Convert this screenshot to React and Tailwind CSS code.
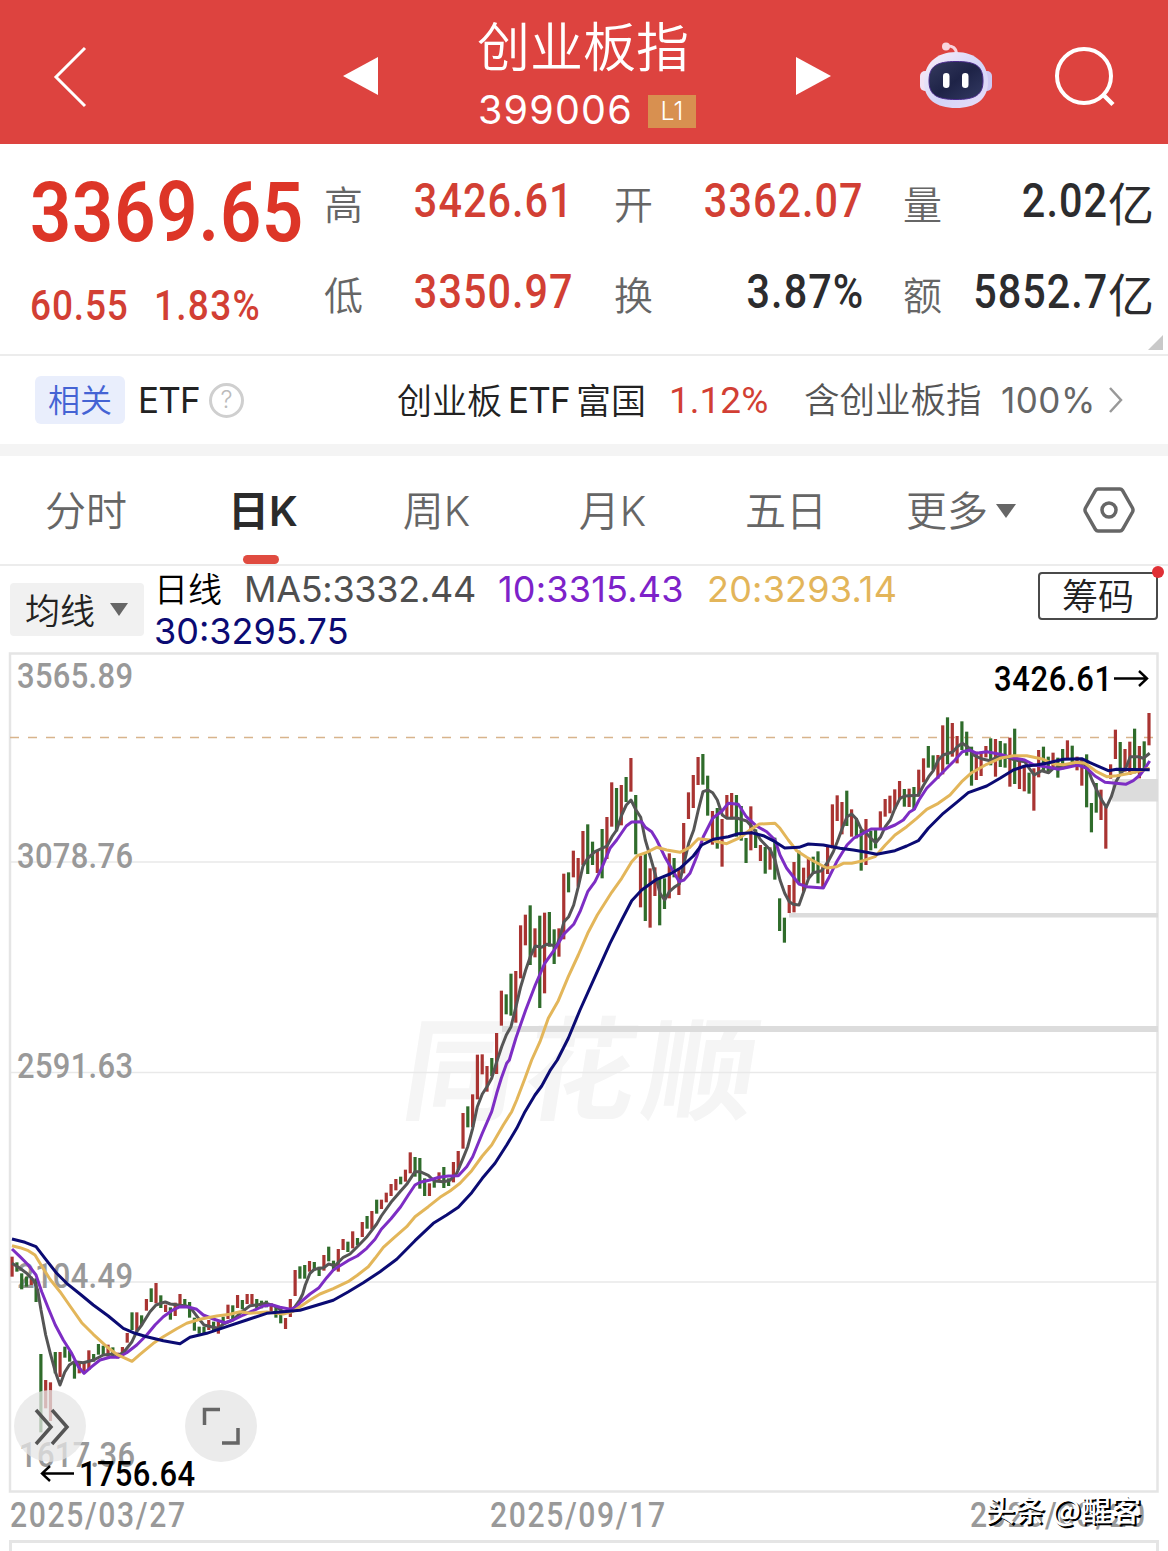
import React, { useState } from "react";

const RED = "#a93432";
const GREEN = "#2f6c2b";

// Daily bars, oldest first: colour, high, low. Every block has its own base line.
const BAR_BLOCKS = [
  {
    base: 1704,
    bars: "R110-170 G127-155 G160-208 G170-200 R170-195 G175-246 G402-637 R480-565 R487-603 G396-460 R396-471 G380-413 G392-425 G425-476 R430-460 R425-460 R391-450 G402-425 G372-404 G377-404 R374-410 G382-410 R398-415 R381-404 R339-368 G277-330 R277-333 G286-316 R237-272 G205-246 R189-250 G226-264 R254-276 G262-299 R248-288 R222-254 G237-263 G246-293 G293-332 G320-341 G320-344 R300-330 G305-332 R305-341 G290-315 R254-297 G256-300 R225-264 G240-268 R222-252 R222-252 G237-265 G242-265 G242-262 R250-275 G255-293 G272-310 R294-327 R237-291 R150-228 G139-176",
  },
  {
    base: 1044,
    bars: "G795-836 R783-815 G786-812 G800-828 R765-812 G740-784 G782-812 R747-815 R717-750 G725-756 R694-745 G714-736 R666-711 G648-686 R633-688 G599-641 R599-627 R578-607 R552-588 R537-571 G530-553 R509-545 R457-520 G471-530 G474-566 G535-588 R550-588 G535-563 R517-540 G501-564 G535-558 R486-547 R453-510 R339-446 G319-382 R283-381 R164-298 R163-223 R198-275 G174-228 R99-222",
  },
  {
    base: 264,
    bars: "R752-857 G763-823 G701-827 R693-848 R556-715 R524-616 G496-675 R565-652 G527-804 R518-760 G516-620 G568-672 R565-650 R401-598 G397-457 R332-412 R354-440 R273-375 G253-402 G305-375 R330-399 G267-415 R231-357 R127-260 G144-274 R135-256 G111-186 R54-155 G165-343 R347-502 G342-543 R385-563 R382-468 G415-556 G415-507 R340-475 G354-412 R385-465 R249-400 R157-237 R105-204 R51-135 G42-134 G107-227 R213-314 G204-326 R237-380 R165-237 R159-238 G165-290 G198-302 G294-369 R199-331 G268-324 R315-363 G321-401 R322-389 G293-419 G475-573 G533-608",
  },
  {
    base: -36,
    bars: "R735-819 R666-817 G632-730 R683-755 R655-715 G650-700 G634-730 R680-745 R620-702 R493-625 R466-543 R486-583 G452-558 R508-590 G535-595 G570-692 R537-675 G572-631 G568-625 R514-565 R477-530 R467-520 R448-508 R423-480 G447-500 R446-501 G441-510 R389-470 R355-427 G318-383 G346-390 R345-416 R256-403 G232-373 R249-350 R288-370 G244-330 G275-347 G320-437 R335-420 R335-408 R318-352 G295-376 R297-410 G303-381 G310-383 R293-440 G266-432 R355-447 R375-454 G398-461 R385-512 R330-412 G320-390 G350-400 R338-385 G353-413 G327-388 R301-360 G317-375 R350-391 R360-437 G343-502 G489-577 G429-518 R449-540 R500-626 R373-416 R269-357 G306-398 R327-395 R305-405 G266-400 R318-415 G304-388 R219-316",
  },
];

// Origins of the four stretches that every average line is made of
const ORIGINS = [
  [0, 1704],
  [900, 1044],
  [1440, 264],
  [2340, -36],
];

const AVERAGES = [
  {
    name: "MA5",
    color: "#555555",
    parts: [
      "36,130 60,145 80,160 100,180 113,210 123,270 137,345 151,400 166,455 180,495 194,457 208,435 223,425 250,428 281,420 310,405 340,402 355,405 370,398 396,365 410,335 425,315 450,275 468,255 482,250 496,246 511,252 540,256 560,258 575,268 598,298 612,315 640,322 655,325 670,312 698,300 720,280 750,257 775,254 800,250 828,260 850,275 871,277 885,260 899,240 908,222",
      "16,855 30,820 43,808 71,803 86,792 105,797 130,772 150,762 172,740 201,710 230,672 244,648 273,607 302,573 320,553 345,515 360,515 385,526 403,543 431,545 450,541 470,520 489,475 503,440 518,385 532,320 547,282 561,260 575,235 590,185",
      "65,920 79,885 93,860 108,800 122,740 137,690 151,650 166,618 185,622 200,613 230,618 240,590 252,545 266,530 281,495 295,440 309,378 323,355 345,335 381,318 396,290 410,270 425,225 439,195 453,180 468,210 482,232 496,300 511,350 525,400 540,460 554,480 568,455 585,440 598,432 612,370 626,310 641,270 655,210 669,155 684,150 698,158 712,180 727,225 741,235 770,234 800,243 820,265 842,300 871,330 885,360 900,420",
      "14,760 28,785 40,793 57,795 71,755 86,715 100,698 125,692 144,665 160,635 172,605 187,565 201,530 215,522 230,538 244,568 259,580 273,595 287,608 302,590 316,560 331,540 345,505 360,475 374,468 415,466 431,435 446,410 460,392 475,360 489,345 518,336 532,320 547,310 565,322 580,345 604,356 630,362 655,350 676,350 705,360 734,365 748,385 763,405 785,392 806,398 820,385 849,380 878,370 907,368 921,380 936,420 950,450 965,480 979,502 994,470 1008,425 1022,400 1037,385 1051,350 1075,350 1090,355 1109,340",
    ],
  },
  {
    name: "MA10",
    color: "#7d2dc4",
    parts: [
      "36,87 60,110 85,135 108,165 125,215 145,265 166,315 190,360 215,400 235,440 252,460 275,440 300,420 330,412 355,412 380,398 410,375 440,345 465,315 490,290 515,272 540,260 565,261 590,268 610,285 640,297 675,308 700,300 730,285 760,272 790,258 815,254 840,262 871,268 890,260",
      "0,908 30,882 57,863 80,833 100,810 115,800 144,782 172,768 200,745 225,718 244,688 273,656 302,620 325,585 345,555 360,547 390,540 417,532 445,528 475,527 500,500 518,470 547,400 575,335 590,280 604,235 620,190",
      "88,960 108,893 137,810 166,735 194,670 223,630 252,582 281,553 300,515 323,455 345,425 367,380 390,325 410,300 439,258 455,246 485,245 496,262 515,275 530,300 554,350 583,400 598,425 612,420 630,400 650,350 670,290 698,235 727,212 745,190 775,193 799,230 828,257 860,275 885,300",
      "0,645 20,685 40,710 57,732 80,740 130,744 144,718 172,662 201,615 222,594 250,580 273,567 316,567 345,555 370,540 388,517 403,508 417,480 440,445 475,410 500,385 525,360 547,335 570,330 590,340 620,335 660,343 691,352 734,360 763,375 806,382 835,388 864,382 893,375 921,385 945,408 975,427 1008,430 1037,433 1060,422 1080,405 1095,385 1109,363",
    ],
  },
  {
    name: "MA20",
    color: "#e3b65a",
    parts: [
      "36,77 60,83 85,92 105,105 120,130 150,178 180,215 210,258 245,308 280,343 320,380 350,403 396,424 420,403 460,370 490,350 530,326 560,310 600,298 650,288 690,283 720,275 750,280 800,276 850,282 880,274",
      "0,920 30,900 60,882 100,866 144,845 172,826 205,800 225,775 250,742 280,715 320,680 345,650 385,620 420,592 450,573 480,550 515,512 547,468 575,435 610,375 635,335 650,300 675,235",
      "155,960 180,905 205,835 235,782 265,710 295,645 323,580 352,525 395,457 425,415 455,365 472,347 500,337 530,322 560,330 600,337 630,322 655,296 690,300 740,311 780,293 810,270 838,252 885,250",
      "0,565 25,600 50,632 80,652 110,668 140,684 170,680 190,670 215,670 250,662 285,650 316,615 345,585 380,560 410,535 440,508 475,490 510,465 545,425 575,398 620,373 660,355 700,347 740,347 790,358 820,372 850,374 890,367 915,370 950,395 980,410 1010,407 1050,400 1109,385",
    ],
  },
  {
    name: "MA30",
    color: "#0b0b73",
    parts: [
      "36,57 75,67 108,80 135,115 170,160 200,190 240,222 280,255 325,288 370,325 400,338 440,350 490,362 540,371 570,352 620,340 680,320 740,300 800,280 850,275",
      "0,931 50,916 100,901 144,876 190,848 240,815 290,778 345,722 400,670 440,645 475,622 515,578 547,535 585,490 620,435 650,385 675,335 705,285 725,258 750,212",
      "232,960 265,895 300,810 345,710 390,610 425,540 455,482 485,450 530,418 570,402 600,385 640,348 665,315 700,298 745,290 775,281 815,278 850,287 885,305",
      "14,624 57,622 85,612 130,615 180,625 220,630 260,637 290,643 345,632 380,618 415,602 445,565 490,520 530,487 565,458 620,438 660,415 700,390 735,378 763,376 800,370 850,358 905,356 930,368 985,392 1010,388 1109,389",
    ],
  },
];

const bars = BAR_BLOCKS.flatMap(({ base, bars }) =>
  bars.split(" ").map((bar) => {
    const [high, low] = bar.slice(1).split("-").map(Number);
    return {
      color: bar[0] === "R" ? RED : GREEN,
      top: (base + high) / 3,
      bottom: (base + low) / 3,
    };
  })
);

const linePoints = (parts) =>
  parts
    .flatMap((part, i) =>
      part.split(" ").map((point) => {
        const [x, y] = point.split(",").map(Number);
        return `${((x + ORIGINS[i][0]) / 3).toFixed(1)},${(
          (y + ORIGINS[i][1]) /
          3
        ).toFixed(1)}`;
      })
    )
    .join(" ");

const AXIS = [
  { label: "3565.89", x: 17, y: 36 },
  { label: "3078.76", x: 17, y: 216 },
  { label: "2591.63", x: 17, y: 426 },
  { label: "2104.49", x: 17, y: 636 },
  { label: "1617.36", x: 19, y: 815 },
];

const TABS = [
  { label: "分时", width: "w-[172px]" },
  { label: "日K", width: "w-[182px]" },
  { label: "周K", width: "w-[165px]" },
  { label: "月K", width: "w-[187px]" },
  { label: "五日", width: "w-[160px]" },
];

const Robot = () => (
  <svg width="76" height="70" viewBox="0 0 76 70">
    <defs>
      <linearGradient id="shell" x1="0" y1="0" x2="1" y2="1">
        <stop offset="0" stopColor="#fbeef8" />
        <stop offset="0.55" stopColor="#d3d5f8" />
        <stop offset="1" stopColor="#e9dcf8" />
      </linearGradient>
      <linearGradient id="visor" x1="0" y1="0" x2="1" y2="1">
        <stop offset="0" stopColor="#353a5e" />
        <stop offset="0.5" stopColor="#1e2347" />
        <stop offset="1" stopColor="#333a63" />
      </linearGradient>
    </defs>
    <path d="M28 6 Q38 5 38.500 14" fill="none" stroke="#f8d3dc" strokeWidth="3" />
    <circle cx="28" cy="6.500" r="4" fill="#f9d5de" />
    <rect x="2" y="31" width="12" height="20" rx="5" fill="#f1e2f5" />
    <rect x="62" y="31" width="12" height="20" rx="5" fill="#cfc9f4" />
    <path
      d="M38 12 C58 12 70 24 70 42 C70 59 58 68 38 68 C18 68 6 59 6 42 C6 24 18 12 38 12Z"
      fill="url(#shell)"
    />
    <path
      d="M38 21.500 C58 21.500 65 26 65 41 C65 55 57 59.500 38 59.500 C19 59.500 11 55 11 41 C11 26 19 21.500 38 21.500Z"
      fill="url(#visor)"
      stroke="#4a2a8c"
      strokeWidth="1"
    />
    <rect x="25" y="33" width="6.500" height="15" rx="3.200" fill="#fff" />
    <rect x="44" y="33" width="6.500" height="15" rx="3.200" fill="#fff" />
  </svg>
);

const Header = () => (
  <header className="flex h-[144px] bg-[#dd433f] text-white">
    <div className="flex w-[343px] items-center pl-[53px] pt-[10px]">
      <svg width="34" height="62" viewBox="0 0 34 62">
        <path d="M32 2 L3 31 L32 60" fill="none" stroke="#fff" strokeWidth="3" />
      </svg>
    </div>
    <div className="flex w-[35px] items-center pt-2">
      <svg width="35" height="40" viewBox="0 0 35 40">
        <path d="M0 20 L35 1 V39Z" fill="#fff" />
      </svg>
    </div>
    <div className="flex w-[418px] flex-col items-center pt-[6px]">
      <h1 className="pr-2 text-[53px] font-[350] leading-[76px]">创业板指</h1>
      <div className="mt-[2px] flex h-[54px] items-center">
        <span className="w-[156px] font-[Inter] text-[39.500px] font-normal tracking-[1.2px]">
          399006
        </span>
        <span className="ml-[14px] flex h-[33px] w-[48px] items-center justify-center bg-[#d89050] font-[Inter] text-[25px] font-light">
          L1
        </span>
      </div>
    </div>
    <div className="flex w-[122px] items-center pt-2">
      <svg width="35" height="40" viewBox="0 0 35 40">
        <path d="M35 20 L0 1 V39Z" fill="#fff" />
      </svg>
    </div>
    <div className="flex items-center pt-[6px]">
      <Robot />
      <svg className="ml-[59px] mt-[6px]" width="66" height="66" viewBox="0 0 66 66">
        <circle cx="31" cy="31" r="27" fill="none" stroke="#fff" strokeWidth="4" />
        <path d="M50 49.500 L60 59.500" stroke="#fff" strokeWidth="4.500" />
      </svg>
    </div>
  </header>
);

const Stat = ({ label, value, unit, red }) => (
  <div className="flex h-[91px] w-[250px] items-center justify-between">
    <span className="text-[39px] font-[350] text-[#666]">{label}</span>
    <span
      className={
        "flex items-center font-medium " + (red ? "text-[#d23f34]" : "text-[#2c2c2e]")
      }
    >
      <span className="mb-[2px] w-max origin-right scale-x-[0.87] font-[Roboto] text-[47.500px] tracking-[1.200px]">
        {value}
      </span>
      {unit && <span className="-mr-[1px] mb-[4px] text-[46px] font-normal">{unit}</span>}
    </span>
  </div>
);

const Quote = () => (
  <section className="relative flex h-[212px] border-b-2 border-[#ececec] bg-white pt-[13px]">
    <div className="w-[324px] pl-[30px] font-[Roboto] text-[#dd3527]">
      <p className="h-[112px] w-max origin-left scale-x-[0.87] text-[83px] font-semibold leading-[112px] tracking-[1px]">
        3369.65
      </p>
      <p className="mt-[10px] flex h-[52px] items-center text-[43px] font-medium text-[#d23f34]">
        <span className="w-[124px]">
          <span className="block w-max origin-left scale-x-[0.86] tracking-[1px]">60.55</span>
        </span>
        <span className="block w-max origin-left scale-x-[0.86] tracking-[1.500px]">1.83%</span>
      </p>
    </div>
    <div className="grid grid-cols-[290px_289px_250px] content-start">
      <Stat label="高" value="3426.61" red />
      <Stat label="开" value="3362.07" red />
      <Stat label="量" value="2.02" unit="亿" />
      <Stat label="低" value="3350.97" red />
      <Stat label="换" value="3.87%" />
      <Stat label="额" value="5852.7" unit="亿" />
    </div>
    <svg className="absolute bottom-[4px] right-[5px]" width="15" height="15">
      <path d="M15 0 V15 H0Z" fill="#c9c9c9" />
    </svg>
  </section>
);

const RelatedEtf = () => (
  <section className="flex h-[100px] items-center border-b-[12px] border-[#f4f4f4] pl-[35px] text-[35px] font-[350] text-[#222]">
    <span className="flex h-[48px] w-[90px] items-center justify-center rounded-md bg-[#e9eefc] pb-[4px] text-[32px] text-[#4463d4]">
      相关
    </span>
    <span className="ml-[13px] w-[71px] font-[Inter] text-[35px] font-normal tracking-[-0.8px]">ETF</span>
    <span className="flex size-[35px] items-center justify-center rounded-full border-[3px] border-[#cfcfcf] font-[Inter] text-[24px] text-[#bbb]">
      ?
    </span>
    <span className="mb-[4px] ml-[153px] flex w-[272px] items-center">
      创业板
      <span className="mx-[6px] mt-[4px] font-[Inter] font-normal tracking-[-0.8px]">ETF</span>
      富国
    </span>
    <span className="w-[135px] font-[Roboto] text-[37px] text-[#d23f34]">
      <span className="block w-max font-normal">1.12%</span>
    </span>
    <span className="mb-[4px] w-[197px] text-[35.500px] text-[#555]">含创业板指</span>
    <span className="w-[107px] font-[Inter] text-[35px] font-normal tracking-[0.5px] text-[#666]">100%</span>
    <svg width="16" height="28" viewBox="0 0 16 28">
      <path d="M2 2 L13 14 L2 26" fill="none" stroke="#999" strokeWidth="2.500" />
    </svg>
  </section>
);

const Tabs = () => {
  const [active, setActive] = useState("日K");

  return (
    <nav className="flex h-[110px] border-b-2 border-[#ececec] font-[Inter,'Noto_Sans_CJK_SC'] text-[41px] font-[350] text-[#666]">
      {TABS.map(({ label, width }) => (
        <button
          key={label}
          onClick={() => setActive(label)}
          className={
            "flex flex-col items-center " +
            width +
            (label === active ? " font-semibold text-[#2b2b2b]" : "")
          }
        >
          <span className="mt-[15px] h-[80px] leading-[80px]">{label}</span>
          {label === active && (
            <span className="mr-[5px] mt-[4px] h-[9px] w-[36px] rounded-full bg-[#e04b40]" />
          )}
        </button>
      ))}
      <button className="-ml-[2px] flex h-[110px] w-[220px] items-center pl-[42px]">
        更多
        <svg className="ml-[8px]" width="20" height="14">
          <path d="M0 0 H20 L10 14Z" fill="#666" />
        </svg>
      </button>
      <button className="-ml-px flex h-[108px] items-center">
        <svg width="52" height="46" viewBox="0 0 52 46">
          <path
            d="M15 2 H37 Q38.500 2 39.500 3.500 L49.500 21 Q50.500 23 49.500 25 L39.500 42.500 Q38.500 44 37 44 H15 Q13.500 44 12.500 42.500 L2.500 25 Q1.500 23 2.500 21 L12.500 3.500 Q13.500 2 15 2Z"
            fill="none"
            stroke="#666"
            strokeWidth="3.500"
          />
          <circle cx="26" cy="23" r="7" fill="none" stroke="#666" strokeWidth="3.500" />
        </svg>
      </button>
    </nav>
  );
};

const Indicators = () => (
  <section className="flex h-[86px] pl-[10px]">
    <button className="mt-[17px] flex h-[53px] w-[134px] items-center rounded bg-[#f1f1f1] pl-[15px] text-[35px] font-[350] text-[#222]">
      <span className="mb-[3px]">均线</span>
      <svg className="ml-[15px]" width="18" height="13">
        <path d="M0 0 H18 L9 13Z" fill="#666" />
      </svg>
    </button>
    <div className="ml-[10px] w-[884px] font-[Inter] text-[36px] font-normal leading-[42px]">
      <div className="mt-[2px] flex h-[42px] items-center">
        <span className="mb-[3px] w-[90px] font-['Noto_Sans_CJK_SC'] text-[34px] font-[350] text-black">
          日线
        </span>
        <span className="w-[254px] tracking-[-0.3px] text-[#4f4f4f]">MA5:3332.44</span>
        <span className="w-[209px] tracking-[0.2px] text-[#7d22c9]">10:3315.43</span>
        <span className="tracking-[0.2px] text-[#e3b55a]">20:3293.14</span>
      </div>
      <p className="text-[#0b0b73]">30:3295.75</p>
    </div>
    <button className="relative mt-[6px] flex h-[48px] w-[120px] items-center justify-center rounded border-2 border-[#4a4a4a] pb-[4px] text-[36px] font-[350] text-[#222]">
      筹码
      <span className="absolute -right-[8px] -top-[8px] size-[12px] rounded-full bg-[#e02f35]" />
    </button>
  </section>
);

// Narrow figures with open spacing, as on the axis
const Figure = ({ x, y, width, className, children }) => (
  <text
    transform={`translate(${x} ${y}) scale(0.86 1)`}
    textLength={width / 0.86}
    fontSize="36"
    className={"font-medium " + className}
  >
    {children}
  </text>
);

const Chart = () => (
  <svg className="block font-[Roboto]" width="1168" height="842" viewBox="0 0 1168 842">
    <text
      transform="translate(399 459) skewX(-9)"
      textLength="352"
      fontSize="112"
      className="fill-[#f5f5f5] font-['Noto_Sans_CJK_SC'] font-bold"
    >
      同花顺
    </text>
    {[210, 420.5, 630].map((y) => (
      <path key={y} d={`M10 ${y} H1158`} stroke="#e9e9e9" strokeWidth="1.500" />
    ))}
    <rect x="10" y="1.500" width="1147.500" height="838" fill="none" stroke="#e5e5e5" strokeWidth="2.500" />
    <rect x="1112" y="127" width="46" height="22.500" fill="#dcdcdc" />
    <rect x="789" y="261" width="369" height="4.500" fill="#dcdcdc" />
    <rect x="502" y="374" width="656" height="6" fill="#dcdcdc" />
    <path d="M10 85.500 H1158" stroke="#d8b48c" strokeWidth="1.500" strokeDasharray="9 9" />

    {AXIS.map(({ label, x, y }) => (
      <Figure key={label} x={x} y={y} width={116} className="fill-[#999]">
        {label}
      </Figure>
    ))}

    {bars.map(({ color, top, bottom }, i) => (
      <rect key={i} x={10.5 + i * 4.797} y={top} width="3.200" height={bottom - top} fill={color} />
    ))}
    {AVERAGES.map(({ name, color, parts }) => (
      <polyline
        key={name}
        points={linePoints(parts)}
        fill="none"
        stroke={color}
        strokeWidth="3"
        strokeLinejoin="round"
      />
    ))}

    <Figure x={994} y={39} width={118} className="fill-black">
      3426.61
    </Figure>
    <path d="M1114 26.500 H1147 M1139 19 L1147 26.500 L1139 34" fill="none" stroke="#000" strokeWidth="2.400" />

    <circle cx="50" cy="774" r="36" fill="#e6e6e6" fillOpacity="0.75" />
    <path d="M36 758 L51 775 L36 792 M52 758 L67 775 L52 792" fill="none" stroke="#555" strokeWidth="3.500" />
    <circle cx="221" cy="774" r="36" fill="#ebebeb" />
    <path d="M220 757.500 H204.500 V773 M222 791 H238 V776" fill="none" stroke="#666" strokeWidth="3.500" />

    <Figure x={79} y={834} width={116} className="fill-black">
      1756.64
    </Figure>
    <path d="M74 821.500 H42 M50 814 L42 821.500 L50 829" fill="none" stroke="#000" strokeWidth="2.400" />
  </svg>
);

const Day = ({ children }) => (
  <span className="w-[480px] shrink-0">
    <span className="block w-max origin-left scale-x-[0.86] tracking-[1.900px]">
      {children}
    </span>
  </span>
);

const Dates = () => (
  <footer>
    <div className="relative flex h-[46px] items-center pb-[4px] pl-[10px] font-[Roboto] text-[35px] font-medium text-[#999]">
      <Day>2025/03/27</Day>
      <Day>2025/09/17</Day>
      <Day>2026/03/20</Day>
      <span className="absolute left-[985px] top-0 whitespace-nowrap font-['Noto_Sans_CJK_SC'] text-[30px] font-medium leading-[29px] text-white [text-shadow:2px_2px_0_#000]">
        头条 @醒客
      </span>
    </div>
    <div className="ml-[9px] h-[11px] w-[1150px] border-x-[3px] border-t-[3px] border-[#e5e5e5]" />
  </footer>
);

const App = () => {
  return (
    <div className="h-[1551px] w-[1168px] overflow-hidden bg-white font-['Noto_Sans_CJK_SC',sans-serif] leading-none">
      <Header />
      <Quote />
      <RelatedEtf />
      <Tabs />
      <Indicators />
      <Chart />
      <Dates />
    </div>
  );
};

export default App;
